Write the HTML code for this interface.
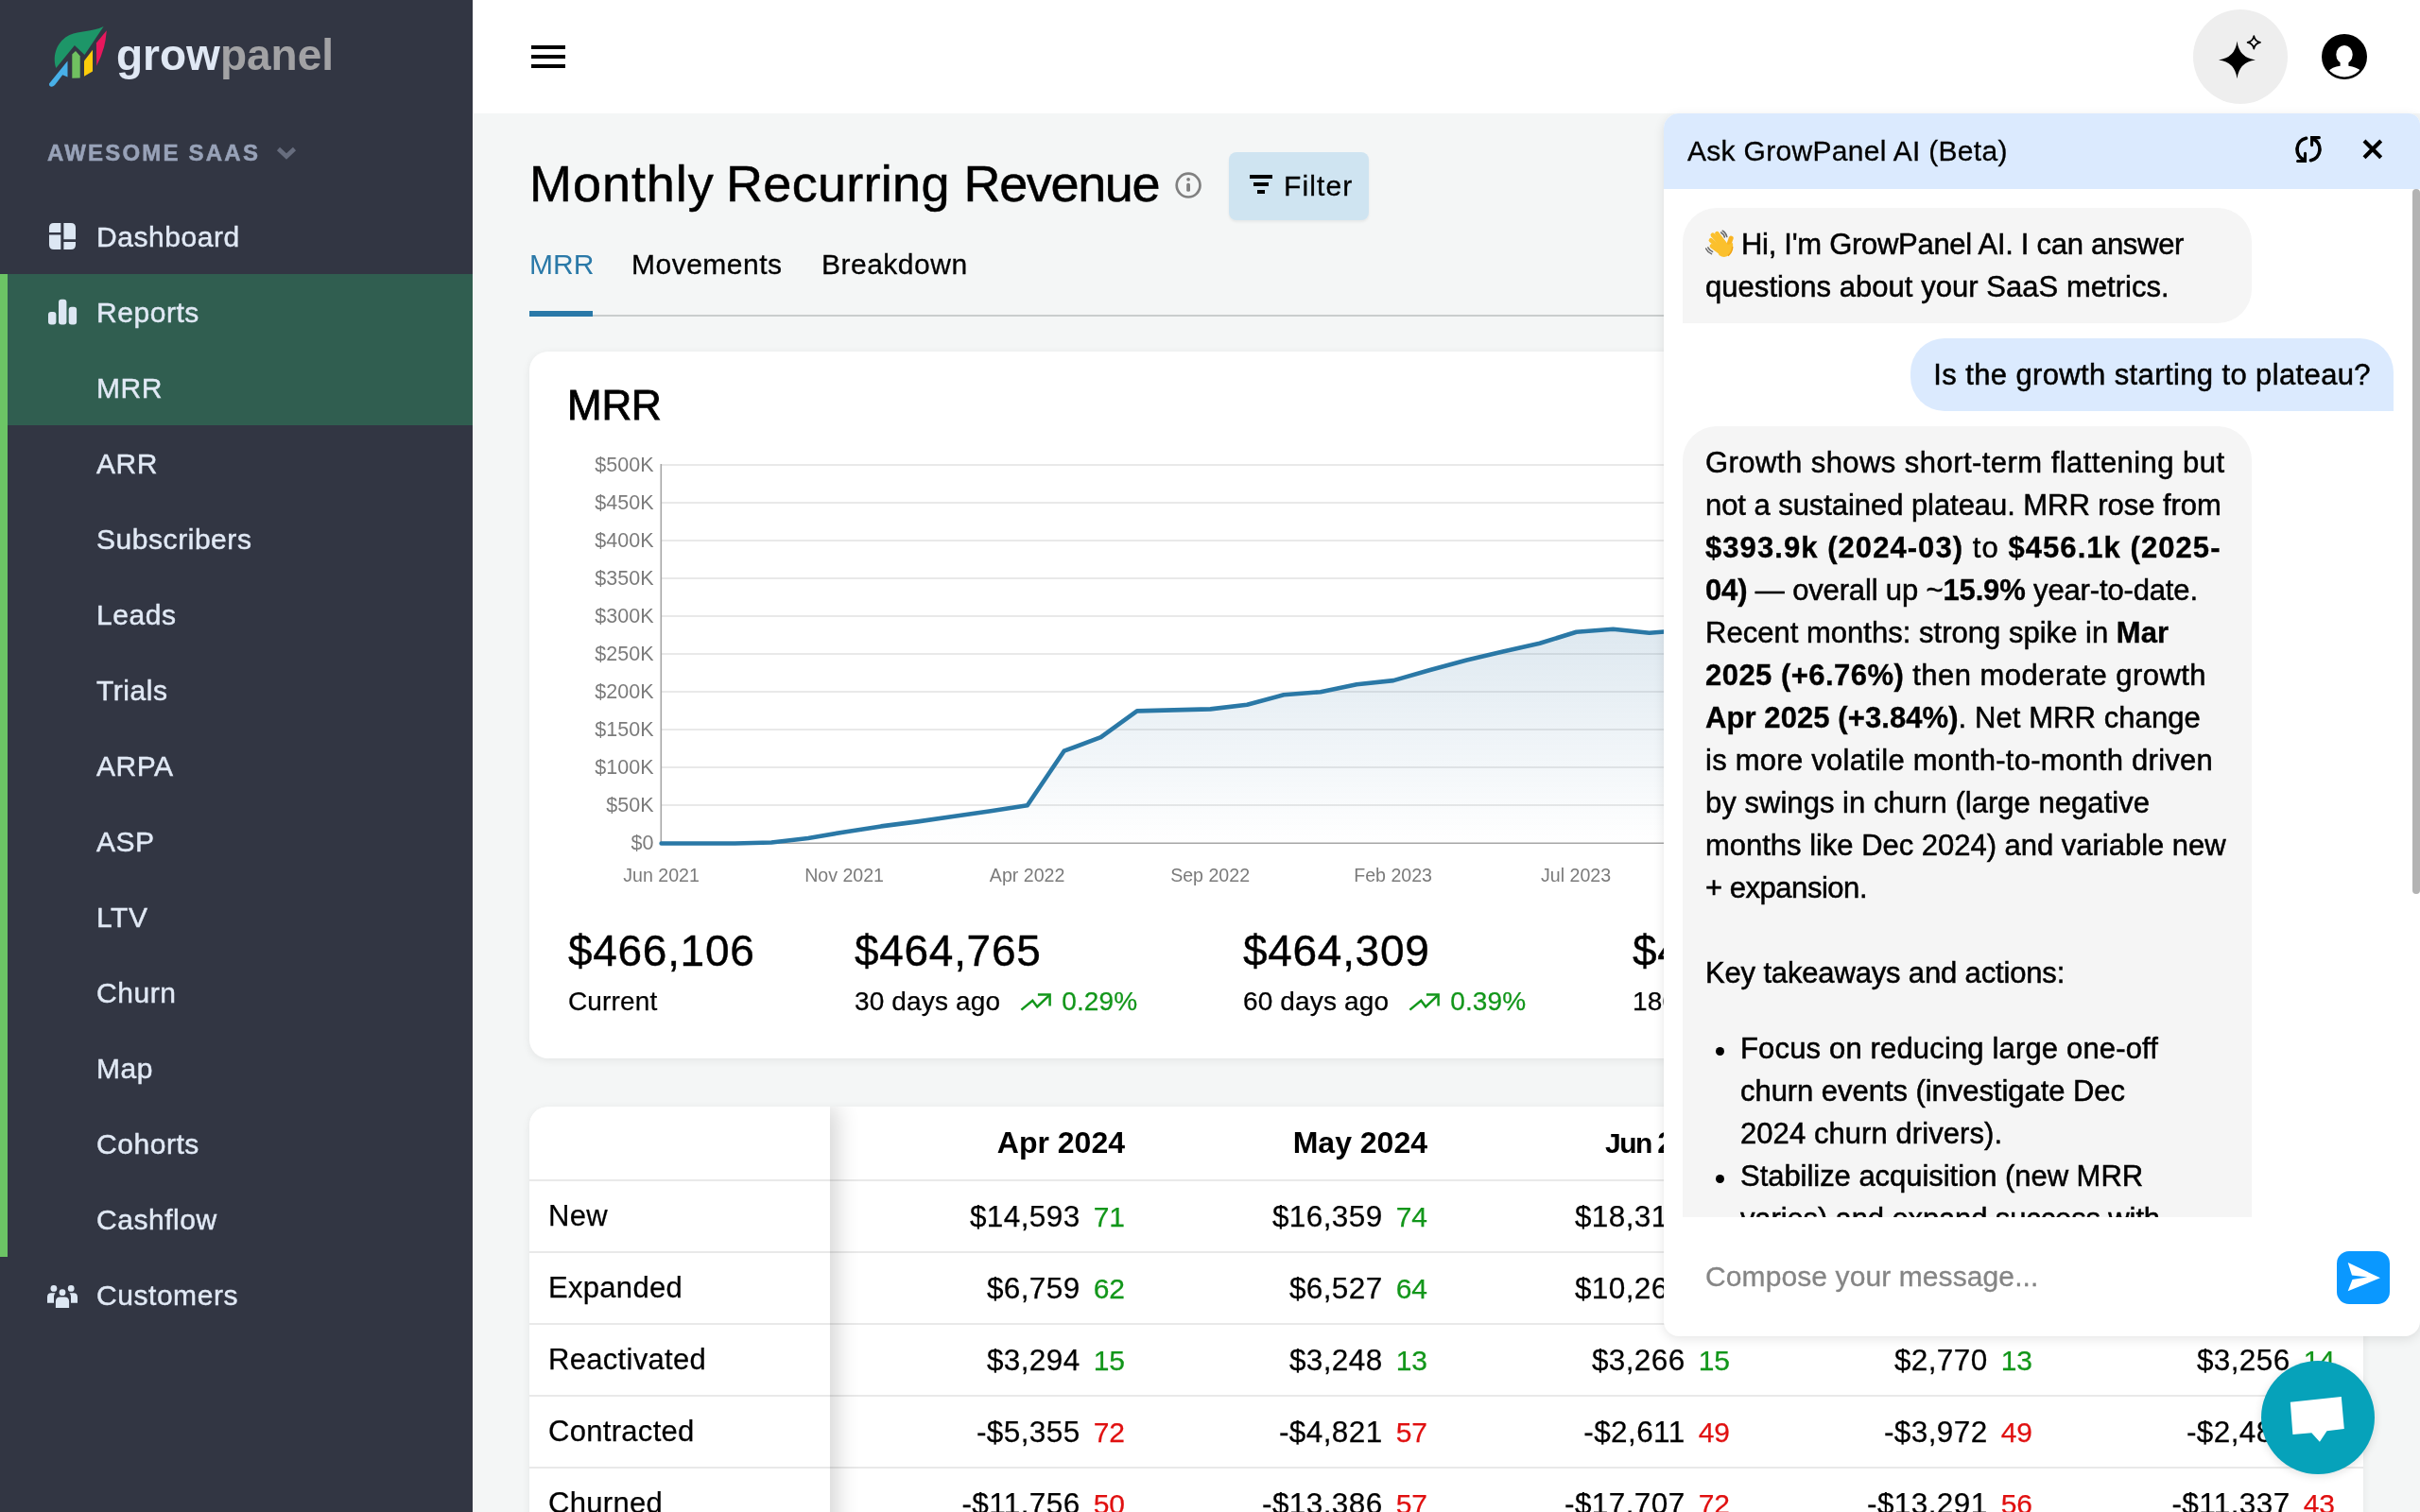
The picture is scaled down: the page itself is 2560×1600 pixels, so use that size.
<!DOCTYPE html>
<html>
<head>
<meta charset="utf-8">
<title>GrowPanel</title>
<style>
*{box-sizing:border-box;margin:0;padding:0}
html,body{width:2560px;height:1600px;overflow:hidden;background:#f4f6f6}
body{position:relative;font-family:"Liberation Sans",sans-serif;color:#000;font-size:30px}
.abs{position:absolute}
#wrap{position:absolute;left:0;top:0;width:2560px;height:1600px;will-change:transform}
/* ---------- sidebar ---------- */
#sidebar{position:absolute;left:0;top:0;width:500px;height:1600px;background:#323643}
#sidebar .strip{position:absolute;left:0;top:290px;width:8px;height:1040px;background:#6cc465}
#sidebar .active{position:absolute;left:8px;top:290px;width:492px;height:160px;background:#305e50}
.nav{position:absolute;left:102px;letter-spacing:.55px;-webkit-text-stroke:.45px #e1e9f5;height:80px;line-height:82px;font-size:30px;color:#e1e9f5;white-space:nowrap}
.org{position:absolute;left:50px;top:142px;height:40px;line-height:40px;font-size:24px;font-weight:bold;letter-spacing:2.2px;-webkit-text-stroke:.5px #98a2b8;color:#98a2b8;white-space:nowrap}
/* ---------- topbar ---------- */
#topbar{position:absolute;left:500px;top:0;width:2060px;height:120px;background:#fff}
/* ---------- main ---------- */
#main{position:absolute;left:500px;top:120px;width:2060px;height:1480px;overflow:hidden}
.card{position:absolute;background:#fff;border-radius:20px;box-shadow:0 2px 10px rgba(0,0,0,.07)}
.sv{font-size:46px;line-height:56px;letter-spacing:.7px;white-space:nowrap;-webkit-text-stroke:0.4px #000}
.sl{font-size:28px;line-height:40px;white-space:nowrap;letter-spacing:.15px;-webkit-text-stroke:0.25px currentColor}
.th{font-size:32px;line-height:40px;font-weight:bold;white-space:nowrap}
.td{font-size:31.5px;letter-spacing:.4px;margin-top:-.5px;line-height:40px;white-space:nowrap;-webkit-text-stroke:0.25px #000}
.td span{font-size:30px;letter-spacing:0;margin-left:14px;-webkit-text-stroke:0.25px currentColor}
.td .g{color:#12961a}.td .r{color:#e01010}
.tl{font-size:31px;line-height:40px;white-space:nowrap;letter-spacing:.3px;-webkit-text-stroke:0.25px #000}
.ln{white-space:nowrap;height:45px;-webkit-text-stroke:0.5px #000;width:max-content}
.ln b{-webkit-text-stroke:0.35px #000}
.lnrow{height:45px;white-space:nowrap}
.li{position:relative;padding-left:37px;height:45px}
.li .dot{position:absolute;left:11px;top:21px;width:9px;height:9px;border-radius:5px;background:#000}
/* ---------- chat ---------- */
#chat{position:absolute;left:1760px;top:120px;width:800px;height:1294px;background:#fff;border-radius:16px 12px 16px 16px;box-shadow:0 3px 12px rgba(0,0,0,.10);overflow:hidden}
#chat .hd{position:absolute;left:0;top:0;width:800px;height:80px;background:#dbeafe}
#chat .hd .t{position:absolute;left:25px;letter-spacing:.3px;-webkit-text-stroke:.3px #000;top:0;line-height:80px;font-size:30px;white-space:nowrap}
#msgs{position:absolute;left:0;top:80px;width:792px;height:1088px;overflow:hidden}
.bub{position:absolute;padding:16px 24px;font-size:31px;line-height:45px;white-space:nowrap}
.bot{background:#f5f5f5;border-radius:36px 36px 36px 0}
.usr{background:#dbeafe;border-radius:36px 36px 0 36px}
</style>
</head>
<body>
<div id="wrap">

<!-- SIDEBAR -->
<div id="sidebar">
  <div class="strip"></div>
  <div class="active"></div>
  <svg class="abs" style="left:44px;top:20px" width="80" height="80" viewBox="0 0 80 80">
    <path d="M65.6,7.9 C52.9,13.8 40.2,12.2 29.6,16.9 C17.5,22.8 10.6,37 15.3,51.9 L34.9,28 L45.5,38.1 Z" fill="#1d9668"/>
    <path d="M27.5,44.4 L27.5,61.6 L22.2,59.3 L14,70.1 Q10.6,73 8.2,70.4 Q7.2,68.8 9,67.2 Z" fill="#48b0e8"/>
    <path d="M32.3,37.6 L36,33.9 L40.7,39.2 L40.7,62.4 L32.3,62.7 Z" fill="#70c060"/>
    <path d="M45,44.4 L54,32.8 L54,55.6 L45,60.8 Z" fill="#fccc0a"/>
    <path d="M57.9,25.4 L68.8,12.2 Q68,22 66.1,29.6 Q63,41 58.2,49.7 Z" fill="#e8175d"/>
  </svg>
  <div class="abs" style="left:123px;top:35px;font-size:46px;line-height:46px;font-weight:bold;color:#e0e8f4;white-space:nowrap;letter-spacing:0px">grow<span style="color:#a2a2a4">panel</span></div>
  <div class="org">AWESOME SAAS</div>
  <svg class="abs" style="left:292px;top:154px" width="22" height="16" viewBox="0 0 22 16"><path d="M2.5,3.5 L11,11.5 L19.5,3.5" fill="none" stroke="#676d7e" stroke-width="4.6"/></svg>
  <svg class="abs" style="left:52px;top:236px" width="28" height="28" viewBox="0 0 28 28" fill="#dde7f3">
    <path d="M5,0 H12.3 V10 H0 V5 Q0,0 5,0 Z"/>
    <path d="M0,12.6 H12.3 V28 H5 Q0,28 0,23 Z"/>
    <path d="M15.4,0 H23 Q28,0 28,5 V17.2 H15.4 Z"/>
    <path d="M15.4,20 H28 V23 Q28,28 23,28 H15.4 Z"/>
  </svg>
  <svg class="abs" style="left:50px;top:316px" width="32" height="28" viewBox="0 0 32 28" fill="#dde7f3">
    <rect x="1" y="14" width="8.4" height="13.4" rx="3"/>
    <rect x="12" y="0.8" width="8.4" height="26.6" rx="3"/>
    <rect x="22.7" y="8.7" width="8.4" height="18.7" rx="3"/>
  </svg>
  <svg class="abs" style="left:48px;top:1358px" width="36" height="28" viewBox="0 0 36 28" fill="#dde7f3">
    <circle cx="8.9" cy="5.4" r="3.4"/><circle cx="27.2" cy="5.4" r="3.4"/>
    <path d="M2,20.7 V14.5 Q2,10.2 6.3,10.2 H10.5 Q9,12 9,14 V20.7 Z"/>
    <path d="M34,20.7 V14.5 Q34,10.2 29.7,10.2 H25.5 Q27,12 27,14 V20.7 Z"/>
    <circle cx="18" cy="9.7" r="4.9" fill="#323643"/>
    <path d="M9,28 V19 Q9,12.6 15.4,12.6 H20.6 Q27,12.6 27,19 V28 Z" fill="#323643"/>
    <circle cx="18" cy="9.7" r="3.4"/>
    <path d="M10.9,26 V19.2 Q10.9,14.5 15.6,14.5 H20.4 Q25.1,14.5 25.1,19.2 V26 Z"/>
  </svg>
  <div class="nav" style="top:210px">Dashboard</div>
  <div class="nav" style="top:290px">Reports</div>
  <div class="nav" style="top:370px">MRR</div>
  <div class="nav" style="top:450px">ARR</div>
  <div class="nav" style="top:530px">Subscribers</div>
  <div class="nav" style="top:610px">Leads</div>
  <div class="nav" style="top:690px">Trials</div>
  <div class="nav" style="top:770px">ARPA</div>
  <div class="nav" style="top:850px">ASP</div>
  <div class="nav" style="top:930px">LTV</div>
  <div class="nav" style="top:1010px">Churn</div>
  <div class="nav" style="top:1090px">Map</div>
  <div class="nav" style="top:1170px">Cohorts</div>
  <div class="nav" style="top:1250px">Cashflow</div>
  <div class="nav" style="top:1330px">Customers</div>
</div>

<!-- TOPBAR -->
<div id="topbar">
  <div class="abs" style="left:62px;top:48px;width:36px;height:4px;background:#000"></div>
  <div class="abs" style="left:62px;top:58px;width:36px;height:4px;background:#000"></div>
  <div class="abs" style="left:62px;top:68px;width:36px;height:4px;background:#000"></div>
  <div class="abs" style="left:1820px;top:10px;width:100px;height:100px;border-radius:50px;background:#eeeeee"></div>
  <svg class="abs" style="left:1830px;top:20px" width="80" height="80" viewBox="0 0 80 80">
    <path d="M36.5,23.6 Q38.6,41.3 56,43.4 Q38.6,45.5 36.5,63.2 Q34.4,45.5 17,43.4 Q34.4,41.3 36.5,23.6 Z" fill="#000"/>
    <path d="M54.3,18.2 Q55.3,23.9 61,24.9 Q55.3,25.9 54.3,31.6 Q53.3,25.9 47.6,24.9 Q53.3,23.9 54.3,18.2 Z" fill="none" stroke="#000" stroke-width="1.7" stroke-linejoin="round"/>
  </svg>
  <svg class="abs" style="left:1956px;top:36px" width="48" height="48" viewBox="0 0 48 48">
    <defs><clipPath id="avc"><circle cx="24" cy="24" r="21.4"/></clipPath></defs>
    <circle cx="24" cy="24" r="24" fill="#000"/>
    <g clip-path="url(#avc)" fill="#fff">
      <ellipse cx="24" cy="21.8" rx="8.7" ry="9.9"/>
      <path d="M19.6,28 V33.7 Q11,34.6 6,40 V48 H42 V39.5 Q37,34.6 28.4,33.7 V28 Z"/>
    </g>
  </svg>
</div>

<!-- MAIN -->
<div id="main">
  <div class="abs" style="left:0;top:0;width:1px;height:1480px;background:#fff"></div>
  <div class="abs" id="title" style="left:60px;top:44px;width:700px;height:60px;font-size:54px;line-height:60px;white-space:nowrap;-webkit-text-stroke:0.5px #000"><span class="abs" style="left:0;letter-spacing:.95px">Monthly</span><span class="abs" style="left:208px;letter-spacing:.3px">Recurring</span><span class="abs" style="left:459.5px;letter-spacing:-1.35px">Revenue</span></div>
  <svg class="abs" style="left:742px;top:61px" width="30" height="30" viewBox="0 0 30 30">
    <circle cx="15.1" cy="15.1" r="12.4" fill="none" stroke="#808080" stroke-width="2.7"/>
    <circle cx="15.1" cy="8.8" r="1.9" fill="#808080"/>
    <rect x="13.2" y="12.8" width="3.8" height="9" rx="1.6" fill="#808080"/>
  </svg>
  <div class="abs" style="left:800px;top:41px;width:148px;height:72px;border-radius:8px;background:#cfe4f1;box-shadow:0 2px 3px rgba(0,0,0,.06)">
    <div class="abs" style="left:22px;top:24px;width:24px;height:4px;background:#000"></div>
    <div class="abs" style="left:26px;top:32px;width:16px;height:4px;background:#000"></div>
    <div class="abs" style="left:30px;top:40px;width:8px;height:4px;background:#000"></div>
    <div class="abs" id="filtertxt" style="left:58px;top:16px;font-size:30px;line-height:40px;letter-spacing:1.1px;-webkit-text-stroke:0.3px #000">Filter</div>
  </div>
  <div class="abs tab" style="left:60px;top:140px;font-size:30px;line-height:40px;color:#2a79a8;letter-spacing:0px">MRR</div>
  <div class="abs tab" style="left:168px;top:140px;font-size:30px;line-height:40px;letter-spacing:.5px;-webkit-text-stroke:0.3px #000">Movements</div>
  <div class="abs tab" style="left:369px;top:140px;font-size:30px;line-height:40px;letter-spacing:.5px;-webkit-text-stroke:0.3px #000">Breakdown</div>
  <div class="abs" style="left:60px;top:213px;width:1940px;height:2px;background:#c9cdcd"></div>
  <div class="abs" style="left:60px;top:209px;width:67px;height:6px;background:#2a79a8"></div>
  <div class="card" id="chartcard" style="left:60px;top:252px;width:1940px;height:748px">
  <svg class="abs" style="left:0;top:0" width="1940" height="748" viewBox="0 0 1940 748" font-family="Liberation Sans, sans-serif">
    <defs><linearGradient id="ag" x1="0" y1="0" x2="0" y2="1"><stop offset="0" stop-color="#2c6f9f" stop-opacity=".26"/><stop offset="1" stop-color="#2c6f9f" stop-opacity="0"/></linearGradient></defs>
    <line x1="140" y1="120.0" x2="2229.7" y2="120.0" stroke="#e9e9e9" stroke-width="2"/><text x="131.5" y="127.0" text-anchor="end" font-size="21.5" fill="#7b7b7b">$500K</text><line x1="140" y1="160.0" x2="2229.7" y2="160.0" stroke="#e9e9e9" stroke-width="2"/><text x="131.5" y="167.0" text-anchor="end" font-size="21.5" fill="#7b7b7b">$450K</text><line x1="140" y1="200.0" x2="2229.7" y2="200.0" stroke="#e9e9e9" stroke-width="2"/><text x="131.5" y="207.0" text-anchor="end" font-size="21.5" fill="#7b7b7b">$400K</text><line x1="140" y1="240.0" x2="2229.7" y2="240.0" stroke="#e9e9e9" stroke-width="2"/><text x="131.5" y="247.0" text-anchor="end" font-size="21.5" fill="#7b7b7b">$350K</text><line x1="140" y1="280.0" x2="2229.7" y2="280.0" stroke="#e9e9e9" stroke-width="2"/><text x="131.5" y="287.0" text-anchor="end" font-size="21.5" fill="#7b7b7b">$300K</text><line x1="140" y1="320.0" x2="2229.7" y2="320.0" stroke="#e9e9e9" stroke-width="2"/><text x="131.5" y="327.0" text-anchor="end" font-size="21.5" fill="#7b7b7b">$250K</text><line x1="140" y1="360.0" x2="2229.7" y2="360.0" stroke="#e9e9e9" stroke-width="2"/><text x="131.5" y="367.0" text-anchor="end" font-size="21.5" fill="#7b7b7b">$200K</text><line x1="140" y1="400.0" x2="2229.7" y2="400.0" stroke="#e9e9e9" stroke-width="2"/><text x="131.5" y="407.0" text-anchor="end" font-size="21.5" fill="#7b7b7b">$150K</text><line x1="140" y1="440.0" x2="2229.7" y2="440.0" stroke="#e9e9e9" stroke-width="2"/><text x="131.5" y="447.0" text-anchor="end" font-size="21.5" fill="#7b7b7b">$100K</text><line x1="140" y1="480.0" x2="2229.7" y2="480.0" stroke="#e9e9e9" stroke-width="2"/><text x="131.5" y="487.0" text-anchor="end" font-size="21.5" fill="#7b7b7b">$50K</text><text x="131.5" y="527.0" text-anchor="end" font-size="21.5" fill="#7b7b7b">$0</text><text x="139.6" y="560.8" text-anchor="middle" font-size="19.6" fill="#7b7b7b">Jun 2021</text><text x="333.1" y="560.8" text-anchor="middle" font-size="19.6" fill="#7b7b7b">Nov 2021</text><text x="526.6" y="560.8" text-anchor="middle" font-size="19.6" fill="#7b7b7b">Apr 2022</text><text x="720.1" y="560.8" text-anchor="middle" font-size="19.6" fill="#7b7b7b">Sep 2022</text><text x="913.6" y="560.8" text-anchor="middle" font-size="19.6" fill="#7b7b7b">Feb 2023</text><text x="1107.1" y="560.8" text-anchor="middle" font-size="19.6" fill="#7b7b7b">Jul 2023</text><text x="1300.6" y="560.8" text-anchor="middle" font-size="19.6" fill="#7b7b7b">Dec 2023</text><text x="1494.1" y="560.8" text-anchor="middle" font-size="19.6" fill="#7b7b7b">May 2024</text><text x="1687.6" y="560.8" text-anchor="middle" font-size="19.6" fill="#7b7b7b">Oct 2024</text><text x="1881.1" y="560.8" text-anchor="middle" font-size="19.6" fill="#7b7b7b">Mar 2025</text>
    <path d="M139.6,520.0 L139.6,520.5 L178.5,520.5 L217.3,520.5 L256.1,519.5 L294.9,515.0 L333.2,508.4 L372.0,502.4 L410.9,497.4 L449.7,491.8 L488.0,486.3 L526.8,480.2 L565.6,422.7 L604.5,408.1 L642.8,380.4 L681.6,379.4 L720.4,378.4 L759.2,373.8 L798.0,363.3 L836.9,360.2 L875.2,352.2 L914.0,348.1 L952.8,337.0 L991.6,326.5 L1029.9,317.4 L1068.8,308.8 L1107.6,296.7 L1146.4,293.7 L1184.7,297.7 L1223.5,294.7 L1262.2,291.5 L1300.9,285.9 L1339.6,279.5 L1378.3,271.5 L1417.0,265.1 L1455.7,258.7 L1494.4,251.5 L1533.1,243.5 L1571.8,237.9 L1610.5,231.5 L1649.2,225.1 L1687.9,218.7 L1726.6,211.5 L1765.3,204.3 L1804.0,199.5 L1842.7,193.1 L1881.4,187.5 L1920.1,182.7 L1958.8,177.1 L1997.5,172.3 L2036.2,167.5 L2074.9,175.5 L2113.6,169.1 L2152.3,154.7 L2191.0,148.3 L2229.7,146.7 L2229.7,520.0 Z" fill="url(#ag)" transform=""/>
    <line x1="139.3" y1="119" x2="139.3" y2="520.5" stroke="#a6a6a6" stroke-width="1.6"/>
    <line x1="138.5" y1="520.3" x2="2229.7" y2="520.3" stroke="#a6a6a6" stroke-width="1.6"/>
    <polyline points="139.6,520.5 178.5,520.5 217.3,520.5 256.1,519.5 294.9,515.0 333.2,508.4 372.0,502.4 410.9,497.4 449.7,491.8 488.0,486.3 526.8,480.2 565.6,422.7 604.5,408.1 642.8,380.4 681.6,379.4 720.4,378.4 759.2,373.8 798.0,363.3 836.9,360.2 875.2,352.2 914.0,348.1 952.8,337.0 991.6,326.5 1029.9,317.4 1068.8,308.8 1107.6,296.7 1146.4,293.7 1184.7,297.7 1223.5,294.7 1262.2,291.5 1300.9,285.9 1339.6,279.5 1378.3,271.5 1417.0,265.1 1455.7,258.7 1494.4,251.5 1533.1,243.5 1571.8,237.9 1610.5,231.5 1649.2,225.1 1687.9,218.7 1726.6,211.5 1765.3,204.3 1804.0,199.5 1842.7,193.1 1881.4,187.5 1920.1,182.7 1958.8,177.1 1997.5,172.3 2036.2,167.5 2074.9,175.5 2113.6,169.1 2152.3,154.7 2191.0,148.3 2229.7,146.7" fill="none" stroke="#2a78a6" stroke-width="4.6" stroke-linejoin="round" stroke-linecap="round"/>
  </svg>
  <div class="abs" id="mrrh" style="left:40px;top:32px;font-size:44px;line-height:50px;letter-spacing:-.2px;-webkit-text-stroke:0.85px #000">MRR</div>
  <div class="abs sv" style="left:41px;top:606px">$466,106</div><div class="abs sl" style="left:41px;top:668px">Current</div><div class="abs sv" style="left:344px;top:606px">$464,765</div><div class="abs sl" style="left:344px;top:668px">30 days ago<svg style="display:inline-block;vertical-align:top;margin:9px 9px 0 20px" width="36" height="24" viewBox="0 0 36 24"><polyline points="2.4,19.6 14.3,9.8 19.2,16.4 31.6,4.6" fill="none" stroke="#12961a" stroke-width="2.5"/><polyline points="19.9,3.5 32.6,3.5 32.6,15.4" fill="none" stroke="#12961a" stroke-width="2.5"/></svg><span style="color:#12961a">0.29%</span></div><div class="abs sv" style="left:755px;top:606px">$464,309</div><div class="abs sl" style="left:755px;top:668px">60 days ago<svg style="display:inline-block;vertical-align:top;margin:9px 9px 0 20px" width="36" height="24" viewBox="0 0 36 24"><polyline points="2.4,19.6 14.3,9.8 19.2,16.4 31.6,4.6" fill="none" stroke="#12961a" stroke-width="2.5"/><polyline points="19.9,3.5 32.6,3.5 32.6,15.4" fill="none" stroke="#12961a" stroke-width="2.5"/></svg><span style="color:#12961a">0.39%</span></div><div class="abs sv" style="left:1167px;top:606px">$458,118</div><div class="abs sl" style="left:1167px;top:668px">180 days ago<svg style="display:inline-block;vertical-align:top;margin:9px 9px 0 20px" width="36" height="24" viewBox="0 0 36 24"><polyline points="2.4,19.6 14.3,9.8 19.2,16.4 31.6,4.6" fill="none" stroke="#12961a" stroke-width="2.5"/><polyline points="19.9,3.5 32.6,3.5 32.6,15.4" fill="none" stroke="#12961a" stroke-width="2.5"/></svg><span style="color:#12961a">1.74%</span></div><div class="abs sv" style="left:1590px;top:606px">$401,560</div><div class="abs sl" style="left:1590px;top:668px">365 days ago<svg style="display:inline-block;vertical-align:top;margin:9px 9px 0 20px" width="36" height="24" viewBox="0 0 36 24"><polyline points="2.4,19.6 14.3,9.8 19.2,16.4 31.6,4.6" fill="none" stroke="#12961a" stroke-width="2.5"/><polyline points="19.9,3.5 32.6,3.5 32.6,15.4" fill="none" stroke="#12961a" stroke-width="2.5"/></svg><span style="color:#12961a">16.08%</span></div>
  </div>
  <div class="card" id="tbl" style="left:60px;top:1051px;width:1940px;height:600px;border-radius:20px;overflow:hidden">
<div class="abs th" style="right:1310px;top:18px">Apr 2024</div><div class="abs th" style="right:990px;top:18px">May 2024</div><div class="abs th" style="left:1138px;top:18px;word-spacing:-4px"><span style="font-size:30px"><span style="letter-spacing:-1.5px">Ju</span>n</span> 2024</div><div class="abs th" style="right:350px;top:18px">Jul 2024</div><div class="abs th" style="right:30px;top:18px">Aug 2024</div><div class="abs th" style="right:-290px;top:18px">Sep 2024</div>
<div class="abs" style="left:0;top:77px;width:1940px;height:2px;background:#e9e9e9"></div><div class="abs" style="left:0;top:153px;width:1940px;height:2px;background:#e9e9e9"></div><div class="abs" style="left:0;top:229px;width:1940px;height:2px;background:#e9e9e9"></div><div class="abs" style="left:0;top:305px;width:1940px;height:2px;background:#e9e9e9"></div><div class="abs" style="left:0;top:381px;width:1940px;height:2px;background:#e9e9e9"></div><div class="abs" style="left:0;top:457px;width:1940px;height:2px;background:#e9e9e9"></div>
<div class="abs td" style="right:1310px;top:96px">$14,593<span class="g">71</span></div><div class="abs td" style="right:990px;top:96px">$16,359<span class="g">74</span></div><div class="abs td" style="right:670px;top:96px">$18,312<span class="g">80</span></div><div class="abs td" style="right:350px;top:96px">$15,870<span class="g">69</span></div><div class="abs td" style="right:30px;top:96px">$17,204<span class="g">77</span></div><div class="abs td" style="right:-290px;top:96px">$16,020<span class="g">70</span></div>
<div class="abs td" style="right:1310px;top:172px">$6,759<span class="g">62</span></div><div class="abs td" style="right:990px;top:172px">$6,527<span class="g">64</span></div><div class="abs td" style="right:670px;top:172px">$10,266<span class="g">70</span></div><div class="abs td" style="right:350px;top:172px">$7,140<span class="g">61</span></div><div class="abs td" style="right:30px;top:172px">$6,903<span class="g">58</span></div><div class="abs td" style="right:-290px;top:172px">$7,011<span class="g">60</span></div>
<div class="abs td" style="right:1310px;top:248px">$3,294<span class="g">15</span></div><div class="abs td" style="right:990px;top:248px">$3,248<span class="g">13</span></div><div class="abs td" style="right:670px;top:248px">$3,266<span class="g">15</span></div><div class="abs td" style="right:350px;top:248px">$2,770<span class="g">13</span></div><div class="abs td" style="right:30px;top:248px">$3,256<span class="g">14</span></div><div class="abs td" style="right:-290px;top:248px">$3,100<span class="g">12</span></div>
<div class="abs td" style="right:1310px;top:324px">-$5,355<span class="r">72</span></div><div class="abs td" style="right:990px;top:324px">-$4,821<span class="r">57</span></div><div class="abs td" style="right:670px;top:324px">-$2,611<span class="r">49</span></div><div class="abs td" style="right:350px;top:324px">-$3,972<span class="r">49</span></div><div class="abs td" style="right:30px;top:324px">-$2,481<span class="r">38</span></div><div class="abs td" style="right:-290px;top:324px">-$3,300<span class="r">45</span></div>
<div class="abs td" style="right:1310px;top:400px">-$11,756<span class="r">50</span></div><div class="abs td" style="right:990px;top:400px">-$13,386<span class="r">57</span></div><div class="abs td" style="right:670px;top:400px">-$17,707<span class="r">72</span></div><div class="abs td" style="right:350px;top:400px">-$13,291<span class="r">56</span></div><div class="abs td" style="right:30px;top:400px">-$11,337<span class="r">43</span></div><div class="abs td" style="right:-290px;top:400px">-$12,040<span class="r">48</span></div>
<div class="abs td" style="right:1310px;top:476px">$7,535<span class="g"></span></div><div class="abs td" style="right:990px;top:476px">$7,927<span class="g"></span></div><div class="abs td" style="right:670px;top:476px">$11,526<span class="g"></span></div><div class="abs td" style="right:350px;top:476px">$8,517<span class="g"></span></div><div class="abs td" style="right:30px;top:476px">$13,545<span class="g"></span></div><div class="abs td" style="right:-290px;top:476px">$10,791<span class="g"></span></div>
<div class="abs" style="left:0;top:0;width:318px;height:600px;background:#fff;box-shadow:8px 0 22px rgba(0,0,0,.16)"><div class="abs" style="left:0;top:77px;width:318px;height:2px;background:#e9e9e9"></div><div class="abs" style="left:0;top:153px;width:318px;height:2px;background:#e9e9e9"></div><div class="abs" style="left:0;top:229px;width:318px;height:2px;background:#e9e9e9"></div><div class="abs" style="left:0;top:305px;width:318px;height:2px;background:#e9e9e9"></div><div class="abs" style="left:0;top:381px;width:318px;height:2px;background:#e9e9e9"></div><div class="abs" style="left:0;top:457px;width:318px;height:2px;background:#e9e9e9"></div><div class="abs tl" style="left:20px;top:96px">New</div><div class="abs tl" style="left:20px;top:172px">Expanded</div><div class="abs tl" style="left:20px;top:248px">Reactivated</div><div class="abs tl" style="left:20px;top:324px">Contracted</div><div class="abs tl" style="left:20px;top:400px">Churned</div><div class="abs tl" style="left:20px;top:476px">Net change</div></div>
</div>
</div>

<!-- CHAT -->
<div id="chat">
  <div class="hd"><div class="t">Ask GrowPanel AI (Beta)</div><svg class="abs" style="left:668px;top:24px" width="28" height="28" viewBox="0 0 28 28" fill="none" stroke="#000" stroke-width="3.7" stroke-linecap="round" stroke-linejoin="miter">
    <path d="M11.5,2.3 A12,12 0 0 0 9.3,25.05"/>
    <path d="M18.7,2.95 A12,12 0 0 1 16.5,25.7"/>
    <polyline points="25.4,1.6 17.6,1.6 17.6,9.6" stroke-width="3.1"/>
    <polyline points="10.5,18.3 10.5,26.5 2.6,26.5" stroke-width="3.1"/>
  </svg>
  <svg class="abs" style="left:738px;top:26px" width="24" height="24" viewBox="0 0 24 24" stroke="#000" stroke-width="4.2" fill="none">
    <path d="M3,3.1 L20.7,20.7 M20.7,3.1 L3,20.7"/>
  </svg></div>
  <div id="msgs">
    <div class="bub bot" style="left:20px;top:20px;width:602px;height:122px"><div class="lnrow"><svg style="display:inline-block;vertical-align:top;margin:7px 8px 0 0" width="30" height="30" viewBox="0 0 30 30"><g stroke="#fbc02d" stroke-linecap="round" fill="none"><path d="M20.5,15 L12.4,4.2" stroke-width="4.6"/><path d="M17.6,16.6 L7.8,5.6" stroke-width="4.6"/><path d="M15.6,19.6 L5.9,11.2" stroke-width="4.6"/><path d="M14.8,23.2 L6.8,17.4" stroke-width="4.4"/><path d="M24.4,17 L27.2,9" stroke-width="5" stroke="#f9b422"/></g><path d="M11.5,19 L19.5,10.5 L24,16 L29,14 Q30,22 25.5,26.5 Q20.5,31 14.5,27 Z" fill="#fbc02d"/><path d="M24,27.6 Q28.5,24 28.8,18" fill="none" stroke="#f0a010" stroke-width="1.4"/><g fill="none" stroke="#6a6a6a" stroke-width="1.5" stroke-linecap="round"><path d="M18.2,1.2 Q22,3.5 22.8,7.6"/><path d="M16.6,3 Q19.8,5 20.4,8"/><path d="M0.6,20 Q2.5,24 6.5,25.6"/><path d="M2.8,18.8 Q4.4,22 7.6,23.4"/></g></svg><div class="ln" style="letter-spacing:-0.29px;display:inline-block">Hi, I'm GrowPanel AI. I can answer</div></div><div class="ln" style="letter-spacing:0.04px;">questions about your SaaS metrics.</div></div>
<div class="bub usr" style="right:20px;top:158px;height:77px"><div class="ln" style="letter-spacing:0.38px;">Is the growth starting to plateau?</div></div>
<div class="bub bot" style="left:20px;top:251px;width:602px;height:1200px"><div class="ln" style="letter-spacing:0.45px;">Growth shows short-term flattening but</div><div class="ln" style="letter-spacing:-0.06px;">not a sustained plateau. MRR rose from</div><div class="ln" style="letter-spacing:1.06px;"><b>$393.9k (2024-03)</b> to <b>$456.1k (2025-</b></div><div class="ln" style="letter-spacing:-0.15px;"><b>04)</b> — overall up ~<b>15.9%</b> year-to-date.</div><div class="ln" style="letter-spacing:0.02px;">Recent months: strong spike in <b>Mar</b></div><div class="ln" style="letter-spacing:0.46px;"><b>2025 (+6.76%)</b> then moderate growth</div><div class="ln" style="letter-spacing:0.08px;"><b>Apr 2025 (+3.84%)</b>. Net MRR change</div><div class="ln" style="letter-spacing:0.26px;">is more volatile month-to-month driven</div><div class="ln" style="letter-spacing:0.04px;">by swings in churn (large negative</div><div class="ln" style="letter-spacing:-0.02px;">months like Dec 2024) and variable new</div><div class="ln" style="letter-spacing:-0.47px;">+ expansion.</div><div class="ln">&nbsp;</div><div class="ln" style="letter-spacing:-0.16px;">Key takeaways and actions:</div><div style="height:35px"></div><div class="li"><i class="dot"></i><div class="ln" style="letter-spacing:0.16px;">Focus on reducing large one-off</div></div><div class="li"><div class="ln" style="letter-spacing:-0.05px;">churn events (investigate Dec</div></div><div class="li"><div class="ln" style="letter-spacing:0.07px;">2024 churn drivers).</div></div><div class="li"><i class="dot"></i><div class="ln" style="letter-spacing:-0.04px;">Stabilize acquisition (new MRR</div></div><div class="li"><div class="ln" style="letter-spacing:-0.13px;">varies) and expand success with</div></div><div class="li"><div class="ln" style="letter-spacing:-0.28px;">existing customers.</div></div></div>
  </div>
  <div class="abs" style="left:792px;top:80px;width:8px;height:746px;background:#b3b3b3;border-radius:4px"></div>
  <div class="abs" id="compose" style="left:44px;top:1208px;font-size:30px;line-height:46px;color:#858585;white-space:nowrap;letter-spacing:.1px;-webkit-text-stroke:0.3px #858585">Compose your message...</div>
  <div class="abs" style="left:712px;top:1204px;width:56px;height:56px;border-radius:13px;background:#0a98ff">
    <svg class="abs" style="left:0;top:0" width="56" height="56" viewBox="0 0 56 56"><path d="M11.7,11.9 L45.9,28.3 L11.7,42.3 L16.5,29.9 L32.4,27.5 L16,25.4 Z" fill="#fff"/></svg>
  </div>
</div>

<div class="abs" style="left:2392px;top:1440px;width:120px;height:120px;border-radius:60px;background:#06a2ba;box-shadow:0 2px 10px rgba(0,0,0,.12)">
  <svg class="abs" style="left:0;top:0" width="120" height="120" viewBox="0 0 120 120"><path d="M30.8,43.7 L84.8,38 L87.8,71.9 L69.5,74.3 L61.9,85.8 L53.3,76.3 L33.4,78.1 Z" fill="#fff"/></svg>
</div>

</div>
</body>
</html>
